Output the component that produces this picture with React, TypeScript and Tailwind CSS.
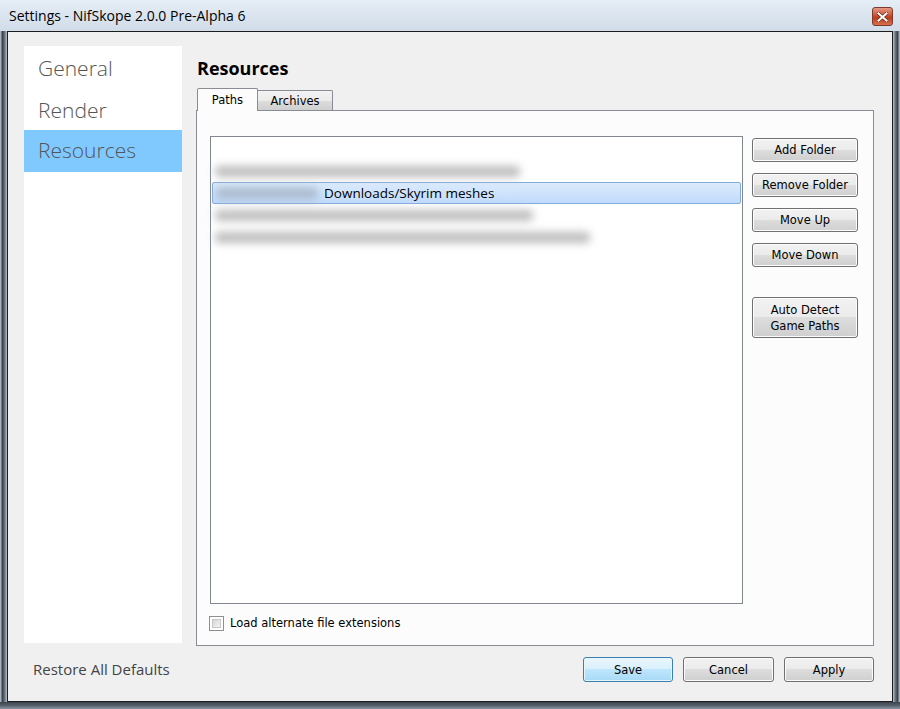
import React from 'react';

const ui = { fontFamily: '"Open Sans", "Noto Sans", sans-serif' };
const tahoma = { fontFamily: '"DejaVu Sans", "Liberation Sans", sans-serif' };

const btn =
  'flex items-center justify-center rounded-[3px] border border-[#707070] bg-[linear-gradient(to_bottom,#f2f2f2_0%,#ebebeb_49%,#dddddd_50%,#cfcfcf_100%)] text-[11.5px] text-black leading-[14px] shadow-[inset_0_0_0_1px_#fcfcfc]';

const saveBtn =
  'flex items-center justify-center rounded-[3px] border border-[#3c7fb1] bg-[linear-gradient(to_bottom,#eaf6fd_0%,#d9f0fc_49%,#bee6fd_50%,#a7d9f5_100%)] text-[11.5px] text-black leading-[14px] shadow-[inset_0_0_0_1px_#e6f4fc]';

const SideItem = ({ label, active }: { label: string; active?: boolean }) => (
  <div
    className={`h-[42px] flex items-center pl-[14px] text-[21px] font-light text-[#555] ${
      active ? 'bg-[#80c9ff]' : ''
    }`}
    style={ui}
  >
    {label}
  </div>
);

const BlurRow = ({ width }: { width: number }) => (
  <div className="h-[22px] flex items-center pl-[3px]">
    <div
      className="h-[11px] rounded-[4px] bg-[#bdbdbd] blur-[4px]"
      style={{ width }}
    />
  </div>
);

export default function App() {
  return (
    <div className="w-[900px] h-[709px] flex flex-col bg-[#56606b] overflow-hidden">
      {/* title bar */}
      <div className="h-[31px] flex items-center justify-between pl-[9px] pr-[7px] bg-[linear-gradient(to_bottom,#e6eef6,#d0dce8)]">
        <span className="text-[14px] text-black" style={ui}>
          Settings - NifSkope 2.0.0 Pre-Alpha 6
        </span>
        <div className="w-[21px] h-[19px] mt-[2px] rounded-[3px] border border-[#7d3b2e] bg-[linear-gradient(to_bottom,#e59a84,#c5462b_50%,#b63617_51%,#d8704f)] flex items-center justify-center">
          <svg width="11" height="10" viewBox="0 0 11 10">
            <path
              d="M1.5 1.5 L9.5 8.5 M9.5 1.5 L1.5 8.5"
              stroke="#6a2a1c"
              strokeWidth="3.4"
              strokeLinecap="square"
            />
            <path
              d="M1.5 1.5 L9.5 8.5 M9.5 1.5 L1.5 8.5"
              stroke="#fff"
              strokeWidth="2"
              strokeLinecap="square"
            />
          </svg>
        </div>
      </div>

      <div className="flex flex-1">
        <div className="w-[7px] bg-[linear-gradient(to_right,#c4d0dc,#3c434b_35%,#6d7884_70%,#b8c6d4)]" />

        {/* client area */}
        <div className="flex-1 flex flex-col border border-[#1c1c1c] bg-[#f0f0f0]">
          <div className="flex gap-[14px] pt-[14px] pl-[16px] pr-[18px]">
            {/* sidebar */}
            <div className="w-[158px] h-[597px] bg-white pt-[2px]">
              <SideItem label="General" />
              <SideItem label="Render" />
              <div className="-mt-[2px]">
                <SideItem label="Resources" active />
              </div>
            </div>

            {/* main */}
            <div className="w-[678px] flex flex-col pt-[10px]">
              <div
                className="h-[24px] leading-[24px] text-[18px] font-bold text-black pl-[1px]"
                style={ui}
              >
                Resources
              </div>
              <div className="mt-[8px] h-[22px] flex items-end pl-[1px]" style={tahoma}>
                <div className="relative z-10 -mb-px h-[23px] w-[61px] flex items-start justify-center pt-[3px] border border-b-0 border-[#898c95] bg-[#fcfcfc] text-[11.5px] text-black rounded-t-[2px]">
                  Paths
                </div>
                <div className="h-[20px] w-[75px] flex items-center justify-center border border-l-0 border-b-0 border-[#898c95] bg-[linear-gradient(to_bottom,#f2f2f2,#ebebeb_50%,#dddddd_51%,#cfcfcf)] text-[11.5px] text-black rounded-tr-[2px] pt-[2px]">
                  Archives
                </div>
              </div>

              {/* tab pane */}
              <div className="h-[536px] border border-[#898c95] bg-[#fcfcfc] pt-[25px] pl-[13px] pr-[15px]">
                <div className="flex gap-[9px]">
                  <div className="w-[533px] h-[468px] border border-[#828790] bg-white pt-[23px] px-[1px]">
                    <BlurRow width={305} />
                    <div className="h-[22px] flex items-center rounded-[2px] border border-[#84acdd] bg-[linear-gradient(to_bottom,#dcebfc,#c1dbfc)] pl-[3px]">
                      <div className="h-[11px] w-[102px] rounded-[4px] bg-[#a9b8cb] blur-[4px]" />
                      <span className="ml-[6px] text-[13.5px] text-black" style={ui}>
                        Downloads/Skyrim meshes
                      </span>
                    </div>
                    <BlurRow width={318} />
                    <BlurRow width={375} />
                  </div>

                  <div className="flex flex-col w-[106px] pt-[2px]" style={tahoma}>
                    <div className={`${btn} h-[24px]`}>Add Folder</div>
                    <div className={`${btn} h-[24px] mt-[11px]`}>Remove Folder</div>
                    <div className={`${btn} h-[24px] mt-[11px]`}>Move Up</div>
                    <div className={`${btn} h-[24px] mt-[11px]`}>Move Down</div>
                    <div className={`${btn} h-[41px] mt-[30px] flex-col leading-[16px]`}>
                      <span>Auto Detect</span>
                      <span>Game Paths</span>
                    </div>
                  </div>
                </div>

                <div className="mt-[11px] flex items-center gap-[6px] -ml-[1px]" style={tahoma}>
                  <div className="w-[15px] h-[15px] border border-[#8e8f8f] bg-white p-[2px]">
                    <div className="w-full h-full bg-[linear-gradient(135deg,#d6d6d6,#f4f4f4)] border border-[#c6c6c6]" />
                  </div>
                  <span className="text-[11.5px] text-black">Load alternate file extensions</span>
                </div>
              </div>
            </div>
          </div>

          {/* bottom row */}
          <div className="mt-[11px] flex items-center justify-between pl-[25px] pr-[18px]">
            <span className="text-[15px] text-[#444]" style={ui}>
              Restore All Defaults
            </span>
            <div className="flex gap-[10px]" style={tahoma}>
              <div className={`${saveBtn} w-[90px] h-[25px]`}>Save</div>
              <div className={`${btn} w-[91px] h-[25px]`}>Cancel</div>
              <div className={`${btn} w-[90px] h-[25px]`}>Apply</div>
            </div>
          </div>
        </div>

        <div className="w-[7px] bg-[linear-gradient(to_right,#b8c6d4,#6d7884_30%,#3c434b_65%,#c4d0dc)]" />
      </div>
      <div className="h-[7px] bg-[linear-gradient(to_bottom,#3c434b,#56606b_50%,#8796a6)]" />
    </div>
  );
}
